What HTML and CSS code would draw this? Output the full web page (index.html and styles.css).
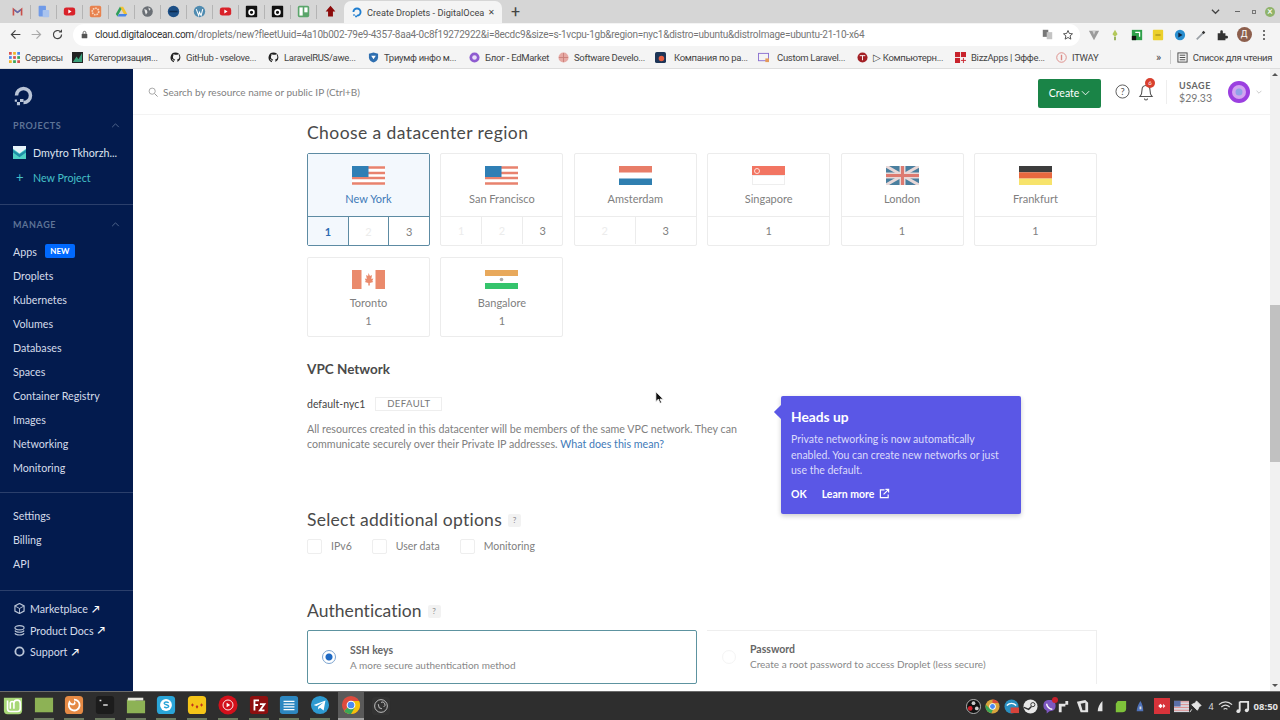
FILE: index.html
```html
<!DOCTYPE html>
<html lang="en">
<head>
    <meta charset="UTF-8">
    <title>Create Droplets - DigitalOcean</title>
    <link rel="stylesheet" href="styles.css">
</head>
<body>
    <!-- Browser tab strip -->
    <div class="tabstrip">
        <div class="pinned">
            <span class="pin"><svg viewBox="0 0 16 16"><path d="M2 13V3l6 5 6-5v10h-2V7L8 10 4 7v6z" fill="#c9504a"/><path d="M4 7l4 3 4-3V5L8 8 4 5z" fill="#5b6fb5"/></svg></span>
            <span class="pin"><svg viewBox="0 0 16 16"><rect x="2" y="1" width="9" height="13" rx="1" fill="#6f9ae8"/><rect x="7" y="6" width="8" height="9" rx="1" fill="#a9c3ee"/></svg></span>
            <span class="pin"><svg viewBox="0 0 16 16"><rect x="1" y="3" width="14" height="10" rx="3" fill="#d9222a"/><path d="M6.5 5.5v5l4-2.5z" fill="#fff"/></svg></span>
            <span class="pin"><svg viewBox="0 0 16 16"><rect x="1" y="1" width="14" height="14" rx="2" fill="#e8824e"/><circle cx="8" cy="8" r="4" fill="none" stroke="#f8d9c2" stroke-width="2" stroke-dasharray="2 1"/></svg></span>
            <span class="pin"><svg viewBox="0 0 16 16"><path d="M6 2h4l5 9h-4z" fill="#f2c230"/><path d="M6 2l-5 9 2 3 5-9z" fill="#2f9e5b"/><path d="M3 14h10l2-3H5z" fill="#4a86e8"/></svg></span>
            <span class="pin"><svg viewBox="0 0 16 16"><circle cx="8" cy="8" r="6.5" fill="#6a6f75"/><path d="M4 5l3 1 1 3-2 3-1-3zM9 3l3 2-2 2z" fill="#e4e4e4"/></svg></span>
            <span class="pin"><svg viewBox="0 0 16 16"><circle cx="8" cy="8" r="7" fill="#1c4f86"/><path d="M3 8h10" stroke="#0d2c50" stroke-width="2"/></svg></span>
            <span class="pin"><svg viewBox="0 0 16 16"><circle cx="8" cy="8" r="7" fill="#4f8bb0"/><path d="M4 5l3 8 1-4 2 4 2-8" fill="none" stroke="#fff" stroke-width="1.3"/></svg></span>
            <span class="pin"><svg viewBox="0 0 16 16"><rect x="1" y="3" width="14" height="10" rx="3" fill="#d9222a"/><path d="M6.5 5.5v5l4-2.5z" fill="#fff"/></svg></span>
            <span class="pin"><svg viewBox="0 0 16 16"><rect x="1" y="1" width="14" height="14" rx="1" fill="#111"/><circle cx="8" cy="9" r="3" fill="none" stroke="#fff" stroke-width="2"/></svg></span>
            <span class="pin"><svg viewBox="0 0 16 16"><rect x="1" y="1" width="14" height="14" rx="1" fill="#111"/><circle cx="8" cy="9" r="3" fill="none" stroke="#fff" stroke-width="2"/></svg></span>
            <span class="pin"><svg viewBox="0 0 16 16"><rect x="1" y="1" width="14" height="14" rx="2" fill="#5aa56a"/><rect x="3" y="3" width="4" height="10" fill="#fff"/><rect x="9" y="3" width="4" height="6" fill="#fff"/></svg></span>
            <span class="pin"><svg viewBox="0 0 16 16"><path d="M8 1l6 7h-3v6H5V8H2z" fill="#8c0a0a"/></svg></span>
        </div>
        <div class="tab">
            <svg class="tab-logo" viewBox="0 0 16 16"><path d="M8 14a6 6 0 1 0-6-6h2.5A3.5 3.5 0 1 1 8 11.5z" fill="#1f7ed0"/><path d="M3 11h2v2H3zM5.5 12.5H8V15H5.5z" fill="#1f7ed0"/></svg>
            <span class="tab-title">Create Droplets - DigitalOcea</span>
            <span class="tab-close">✕</span>
        </div>
        <span class="tab-new">+</span>
        <div class="win-btns">
            <svg viewBox="0 0 10 10" class="win-chev"><path d="M1 3l4 4 4-4" fill="none" stroke="#444" stroke-width="1.4"/></svg>
            <span class="win-min"></span>
            <span class="win-max"></span>
            <span class="win-close">×</span>
        </div>
    </div>

    <!-- Address bar -->
    <div class="toolbar">
        <svg class="nav-ic" viewBox="0 0 16 16"><path d="M14 8H3M8 3L3 8l5 5" fill="none" stroke="#444" stroke-width="1.5"/></svg>
        <svg class="nav-ic" viewBox="0 0 16 16"><path d="M2 8h11M8 3l5 5-5 5" fill="none" stroke="#aaa" stroke-width="1.5"/></svg>
        <svg class="nav-ic" viewBox="0 0 16 16"><path d="M13 8a5 5 0 1 1-1.5-3.5" fill="none" stroke="#444" stroke-width="1.5"/><path d="M13.5 1.5v4h-4z" fill="#444"/></svg>
        <div class="omnibox">
            <svg class="lock" viewBox="0 0 10 12"><rect x="1" y="5" width="8" height="6.5" rx="1" fill="#555"/><path d="M3 5V3.5a2 2 0 0 1 4 0V5" fill="none" stroke="#555" stroke-width="1.2"/></svg>
            <span class="url"><b>cloud.digitalocean.com</b>/droplets/new?fleetUuid=4a10b002-79e9-4357-8aa4-0c8f19272922&amp;i=8ecdc9&amp;size=s-1vcpu-1gb&amp;region=nyc1&amp;distro=ubuntu&amp;distroImage=ubuntu-21-10-x64</span>
            <svg class="omni-ic" viewBox="0 0 14 14"><rect x="1" y="1" width="7" height="9" fill="#777"/><rect x="6" y="4" width="7" height="9" fill="#c4c4c4"/></svg>
            <svg class="omni-star" viewBox="0 0 16 16"><path d="M8 2l1.800 4 4.200.4-3.200 2.800 1 4.300L8 11.300l-3.800 2.200 1-4.300L2 6.400 6.200 6z" fill="none" stroke="#444" stroke-width="1.2"/></svg>
        </div>
        <div class="ext">
            <svg viewBox="0 0 14 14"><path d="M1 2h12L7 13z" fill="#9b9b9b"/><path d="M5 2h4L7 7z" fill="#d0d0d0"/></svg>
            <svg viewBox="0 0 14 14"><path d="M7 1l3 5-3 3-3-3z" fill="#b4c95a"/><path d="M6 9h2v4H6z" fill="#8aa84a"/></svg>
            <svg viewBox="0 0 14 14"><rect x="1" y="1" width="12" height="12" fill="#2fa04a"/><path d="M1 8h5v5H1z" fill="#111"/><path d="M5 4h5v5" fill="none" stroke="#fff" stroke-width="1.5"/></svg>
            <svg viewBox="0 0 14 14"><rect x="1" y="1" width="12" height="12" rx="1" fill="#ecd02a"/><path d="M4 7h6" stroke="#a8921a" stroke-width="1.5"/></svg>
            <svg viewBox="0 0 14 14"><circle cx="7" cy="7" r="6" fill="#2a8fd0"/><path d="M5 4l5 3-5 3z" fill="#10233b"/></svg>
            <svg viewBox="0 0 14 14"><path d="M2 12l7-7" stroke="#9aa0a6" stroke-width="2"/><path d="M8 4l2-2 2 2-2 2z" fill="#333"/></svg>
            <svg viewBox="0 0 14 14"><path d="M2 5h3V3a1.500 1.500 0 0 1 3 0v2h3v3h1.500a1.500 1.500 0 0 1 0 3H11v2H2z" fill="#333"/></svg>
            <span class="avatar">Д</span>
            <span class="kebab"><i></i><i></i><i></i></span>
        </div>
    </div>

    <!-- Bookmarks -->
    <div class="bookmarks">
        <span class="bm bm-1"><svg viewBox="0 0 12 12"><rect width="3" height="3" fill="#d9534f"/><rect x="4.5" width="3" height="3" fill="#f0b429"/><rect x="9" width="3" height="3" fill="#4a86e8"/><rect y="4.5" width="3" height="3" fill="#4a86e8"/><rect x="4.5" y="4.5" width="3" height="3" fill="#d9534f"/><rect x="9" y="4.5" width="3" height="3" fill="#3aa35c"/><rect y="9" width="3" height="3" fill="#f0b429"/><rect x="4.5" y="9" width="3" height="3" fill="#3aa35c"/><rect x="9" y="9" width="3" height="3" fill="#d9534f"/></svg>Сервисы</span>
        <span class="bm bm-2"><svg viewBox="0 0 12 12"><rect width="12" height="12" fill="#222"/><path d="M1 11l4-6 2 3 4-7v10z" fill="#3aa07a"/></svg>Категоризация...</span>
        <span class="bm bm-3"><svg viewBox="0 0 12 12"><use href="#gh-mark"/></svg>GitHub - vselove...</span>
        <span class="bm bm-4"><svg viewBox="0 0 12 12"><use href="#gh-mark"/></svg>LaravelRUS/awe...</span>
        <span class="bm bm-5"><svg viewBox="0 0 12 12"><path d="M6 .5l5 1.500v4c0 3-2.500 4.500-5 5.500C3.500 10.500 1 9 1 6V2z" fill="#2f6fb0"/><path d="M3.500 4h5L6 8z" fill="#fff"/></svg>Триумф инфо м...</span>
        <span class="bm bm-6"><svg viewBox="0 0 12 12"><circle cx="6" cy="6" r="5.5" fill="#8e5bd0"/><circle cx="6" cy="6" r="2.5" fill="#e9def8"/></svg>Блог - EdMarket</span>
        <span class="bm bm-7"><svg viewBox="0 0 12 12"><circle cx="6" cy="6" r="5.5" fill="#e6a9a4"/><path d="M1 6h10M6 1v10" stroke="#c97f79"/></svg>Software Develo...</span>
        <span class="bm bm-8"><svg viewBox="0 0 12 12"><rect width="12" height="12" rx="2" fill="#1d3557"/><circle cx="7" cy="7" r="3" fill="#e85d3f"/></svg>Компания по ра...</span>
        <span class="bm bm-9"><svg viewBox="0 0 12 12"><rect x=".5" y="1.5" width="11" height="8" fill="none" stroke="#8a6fd0"/><rect x="8" y="7" width="4" height="4" fill="#e59a5b"/></svg>Custom Laravel...</span>
        <span class="bm bm-10"><svg viewBox="0 0 12 12"><circle cx="6" cy="6" r="5.5" fill="#a32025"/><path d="M3 4h6M6 4v5" stroke="#fff"/></svg>▷ Компьютерн...</span>
        <span class="bm bm-11"><svg viewBox="0 0 12 12"><rect width="5.5" height="5.5" fill="#c8232c"/><rect x="6.5" width="5.5" height="5.5" fill="#c8232c"/><rect y="6.5" width="5.5" height="5.5" fill="#c8232c"/><path d="M9.2 6.500V12M6.500 9.200H12" stroke="#c8232c"/></svg>BizzApps | Эффе...</span>
        <span class="bm bm-12"><svg viewBox="0 0 12 12"><circle cx="6" cy="6" r="5.2" fill="none" stroke="#dd8a85"/><path d="M6 3v6" stroke="#dd8a85" stroke-width="1.5"/></svg>ITWAY</span>
        <span class="bm-more">»</span>
        <span class="bm-sep"></span>
        <span class="bm bm-list"><svg viewBox="0 0 12 12"><rect x="1" y="1" width="10" height="10" fill="none" stroke="#444"/><path d="M3 3.500h6M3 6h6M3 8.500h6" stroke="#444"/></svg>Список для чтения</span>
    </div>

    <div class="app">
        <aside class="sidebar">
            <svg class="do-logo" viewBox="0 0 24 24"><path d="M12 22a10 10 0 1 0-10-10h4a6 6 0 1 1 6 6z" fill="#b9c4d6"/><path d="M8 16h4v3.500H8zM4.500 19.500H8V23H4.500zM2 16.500h2.500V19H2z" fill="#b9c4d6"/></svg>
            <div class="side-label">PROJECTS<svg viewBox="0 0 10 6"><path d="M1 5l4-4 4 4" fill="none" stroke="#5e7396" stroke-width="1"/></svg></div>
            <a class="side-item project"><svg viewBox="0 0 14 14"><rect width="14" height="14" fill="#4fd1c5"/><path d="M0 0h14v3L7 8 0 3z" fill="#e7f3fb"/><path d="M0 4l7 5 7-5v3l-7 5-7-5z" fill="#1f8ea8"/></svg>Dmytro Tkhorzh...</a>
            <a class="side-item new-project"><span class="plus">+</span>New Project</a>
            <div class="side-line line-1"></div>
            <div class="side-label">MANAGE<svg viewBox="0 0 10 6"><path d="M1 5l4-4 4 4" fill="none" stroke="#5e7396" stroke-width="1"/></svg></div>
            <nav class="side-nav">
                <a class="side-item">Apps <span class="new-badge">NEW</span></a>
                <a class="side-item">Droplets</a>
                <a class="side-item">Kubernetes</a>
                <a class="side-item">Volumes</a>
                <a class="side-item">Databases</a>
                <a class="side-item">Spaces</a>
                <a class="side-item">Container Registry</a>
                <a class="side-item">Images</a>
                <a class="side-item">Networking</a>
                <a class="side-item">Monitoring</a>
            </nav>
            <div class="side-line line-2"></div>
            <nav class="nav-account">
                <a class="side-item">Settings</a>
                <a class="side-item">Billing</a>
                <a class="side-item">API</a>
            </nav>
            <div class="side-line line-3"></div>
            <nav class="side-links">
                <a class="side-link"><svg viewBox="0 0 12 12"><path d="M6 .5l5 2.700v5.600L6 11.500 1 8.800V3.200z" fill="none" stroke="#b9c4d6" stroke-width="1.300"/><path d="M1 3.200L6 6l5-2.800M6 6v5.500" fill="none" stroke="#b9c4d6"/></svg>Marketplace <span class="arrow">↗</span></a>
                <a class="side-link"><svg viewBox="0 0 12 12"><ellipse cx="6" cy="3" rx="5" ry="2.300" fill="none" stroke="#b9c4d6" stroke-width="1.200"/><path d="M1 6c1 2.500 9 2.500 10 0M1 9c1 2.500 9 2.500 10 0" fill="none" stroke="#b9c4d6" stroke-width="1.200"/></svg>Product Docs <span class="arrow">↗</span></a>
                <a class="side-link"><svg viewBox="0 0 12 12"><circle cx="6" cy="6" r="4.500" fill="none" stroke="#b9c4d6" stroke-width="2"/></svg>Support <span class="arrow">↗</span></a>
            </nav>
        </aside>

        <div class="main">
            <header class="topbar">
                <svg class="search-ic" viewBox="0 0 12 12"><circle cx="5" cy="5" r="3.700" fill="none" stroke="#999" stroke-width="1"/><path d="M8 8l3.500 3.500" stroke="#999" stroke-width="1.200"/></svg>
                <span class="search-text">Search by resource name or public IP (Ctrl+B)</span>
                <button class="create-btn">Create<svg viewBox="0 0 10 6"><path d="M1 1l4 4 4-4" fill="none" stroke="#fff" stroke-width="1"/></svg></button>
                <svg class="help-ic" viewBox="0 0 16 16"><circle cx="8" cy="8" r="7" fill="none" stroke="#555" stroke-width="1"/><text x="8" y="11.500" text-anchor="middle" class="help-q">?</text></svg>
                <div class="bell">
                    <svg viewBox="0 0 16 18"><path d="M8 2.500c-2.800 0-4 2-4 4.500 0 3-.6 5-2 6.500h12c-1.400-1.500-2-3.500-2-6.500 0-2.500-1.200-4.500-4-4.500zM6.500 15.500a1.500 1.500 0 0 0 3 0" fill="none" stroke="#555" stroke-width="1.100"/></svg>
                    <span class="bell-count">6</span>
                </div>
                <div class="usage"><span class="usage-label">USAGE</span><span class="usage-sum">$29.33</span></div>
                <svg class="user-pic" viewBox="0 0 22 22"><circle cx="11" cy="11" r="11" fill="#9b3fe0"/><circle cx="11" cy="11" r="7" fill="#d2a4f0"/><circle cx="11" cy="11" r="3.500" fill="#8fa2e8"/></svg>
                <svg class="user-chev" viewBox="0 0 10 6"><path d="M1 1l4 4 4-4" fill="none" stroke="#aaa" stroke-width="1"/></svg>
            </header>

            <div class="content">
                <h2 class="sec-title title-region">Choose a datacenter region</h2>
                <div class="regions">
                    <div class="region selected">
                        <div class="region-top">
                            <svg class="flag" viewBox="0 0 33 19"><use href="#flag-us"/></svg>
                            <span>New York</span>
                        </div>
                        <div class="region-dc"><span class="on">1</span><span class="off">2</span><span>3</span></div>
                    </div>
                    <div class="region">
                        <div class="region-top">
                            <svg class="flag" viewBox="0 0 33 19"><use href="#flag-us"/></svg>
                            <span>San Francisco</span>
                        </div>
                        <div class="region-dc"><span class="off">1</span><span class="off">2</span><span>3</span></div>
                    </div>
                    <div class="region">
                        <div class="region-top">
                            <svg class="flag" viewBox="0 0 33 19"><rect width="33" height="6.500" fill="#e87d68"/><rect y="12.500" width="33" height="6.500" fill="#2f7fb0"/></svg>
                            <span>Amsterdam</span>
                        </div>
                        <div class="region-dc"><span class="off">2</span><span>3</span></div>
                    </div>
                    <div class="region">
                        <div class="region-top">
                            <svg class="flag" viewBox="0 0 33 19"><rect width="33" height="9.500" fill="#f27562"/><rect y="9.500" x=".5" width="32" height="9" fill="#fff" stroke="#eee"/><circle cx="5" cy="5" r="2.500" fill="none" stroke="#fde4df"/></svg>
                            <span>Singapore</span>
                        </div>
                        <div class="region-dc"><span>1</span></div>
                    </div>
                    <div class="region">
                        <div class="region-top">
                            <svg class="flag" viewBox="0 0 33 19"><rect width="33" height="19" fill="#4a7f9f"/><path d="M0 0l33 19M33 0L0 19" stroke="#e8d8d8" stroke-width="3"/><path d="M16.500 0v19M0 9.500h33" stroke="#e8d8d8" stroke-width="6"/><path d="M16.500 0v19M0 9.500h33" stroke="#dd7a70" stroke-width="3"/></svg>
                            <span>London</span>
                        </div>
                        <div class="region-dc"><span>1</span></div>
                    </div>
                    <div class="region">
                        <div class="region-top">
                            <svg class="flag" viewBox="0 0 33 19"><rect width="33" height="6.300" fill="#3d3d3d"/><rect y="6.300" width="33" height="6.300" fill="#e8683f"/><rect y="12.600" width="33" height="6.400" fill="#f7e36b"/></svg>
                            <span>Frankfurt</span>
                        </div>
                        <div class="region-dc"><span>1</span></div>
                    </div>
                    <div class="region region-short">
                        <div class="region-top">
                            <svg class="flag" viewBox="0 0 33 19"><rect width="9.500" height="19" fill="#ea8a6c"/><rect x="23.500" width="9.500" height="19" fill="#ea8a6c"/><path d="M16.500 3l1.500 3 2-1-.7 4 2-.5-1 2.500 1 1-3.500 1v2.500h-1.500V13l-3.500-1 1-1-1-2.500 2 .5-.7-4 2 1z" fill="#ea8a6c"/></svg>
                            <span>Toronto</span>
                            <span class="dc-plain">1</span>
                        </div>
                    </div>
                    <div class="region region-short">
                        <div class="region-top">
                            <svg class="flag" viewBox="0 0 33 19"><rect width="33" height="6" fill="#e8a95c"/><rect y="13" width="33" height="6" fill="#35c46c"/><circle cx="16.500" cy="9.500" r="1.800" fill="#aaa"/></svg>
                            <span>Bangalore</span>
                            <span class="dc-plain">1</span>
                        </div>
                    </div>
                </div>

                <div class="vpc">
                    <h3 class="vpc-title">VPC Network</h3>
                    <div class="vpc-name"><b>default-nyc1</b><span class="default-tag">DEFAULT</span></div>
                    <p class="vpc-text">All resources created in this datacenter will be members of the same VPC network. They can communicate securely over their Private IP addresses. <a>What does this mean?</a></p>

                    <div class="popover">
                        <h4>Heads up</h4>
                        <p>Private networking is now automatically enabled. You can create new networks or just use the default.</p>
                        <div class="pop-links">
                            <span>OK</span>
                            <span>Learn more<svg viewBox="0 0 12 12"><path d="M6 2H1.500v8.500H10V7" fill="none" stroke="#fff" stroke-width="1.300"/><path d="M5 7l5-5M7 1.500h3.500V5" fill="none" stroke="#fff" stroke-width="1.300"/></svg></span>
                        </div>
                    </div>
                </div>

                <h2 class="sec-title title-options">Select additional options <span class="hint">?</span></h2>
                <div class="options">
                    <label class="opt"><i></i>IPv6</label>
                    <label class="opt"><i></i>User data</label>
                    <label class="opt"><i></i>Monitoring</label>
                </div>

                <h2 class="sec-title title-auth">Authentication <span class="hint">?</span></h2>
                <div class="auth">
                    <div class="auth-card selected">
                        <span class="radio"></span>
                        <div><b>SSH keys</b><p>A more secure authentication method</p></div>
                    </div>
                    <div class="auth-card plain">
                        <span class="radio empty"></span>
                        <div><b>Password</b><p>Create a root password to access Droplet (less secure)</p></div>
                    </div>
                </div>
            </div>

            <div class="scrollbar">
                <span class="sb-up"></span>
                <span class="sb-thumb"></span>
                <span class="sb-down"></span>
            </div>

            <!-- mouse pointer from the recording -->
            <svg class="cursor" viewBox="0 0 12 16"><path d="M1 1v12l3-3 2 5 2-1-2-4h4z" fill="#111" stroke="#fff" stroke-width="1"/></svg>
        </div>
    </div>

    <!-- Desktop panel -->
    <footer class="panel">
        <div class="launchers">
            <span class="lnch"><svg viewBox="0 0 22 22"><path d="M1 2h20v14a4 4 0 0 1-4 4H5a4 4 0 0 1-4-4z" fill="#a8d878"/><path d="M5 5v9a3 3 0 0 0 3 3h8a3 3 0 0 0 3-3V8a2 2 0 0 0-7 0v6M12 8a2 2 0 0 0-4 0v6" fill="none" stroke="#fff" stroke-width="1.800"/></svg></span>
            <span class="lnch run"><svg viewBox="0 0 22 22"><rect x="1" y="3" width="20" height="16" fill="#8db255"/></svg></span>
            <span class="lnch run"><svg viewBox="0 0 22 22"><rect x="1" y="1" width="20" height="20" rx="4" fill="#e58a45"/><path d="M11 5a6 6 0 1 1-5 3c1 2 3 3 5 2 1-.5 1-2 0-2" fill="none" stroke="#fff" stroke-width="2"/></svg></span>
            <span class="lnch run"><svg viewBox="0 0 22 22"><rect x="1" y="1" width="20" height="20" rx="3" fill="#1c1c1c"/><path d="M5 6h2M9 11h5" stroke="#ddd" stroke-width="1.500"/></svg></span>
            <span class="lnch run"><svg viewBox="0 0 22 22"><path d="M1 5h8l2 1h10v14H1z" fill="#8db255"/><rect x="2" y="3" width="17" height="3" fill="#e8e8e0"/></svg></span>
            <span class="lnch run"><svg viewBox="0 0 22 22"><rect x="1" y="1" width="20" height="20" rx="4" fill="#2aa5d8"/><circle cx="11" cy="11" r="6.500" fill="#fff"/><path d="M14 8.500c-2-1.500-5-1-5 .5 0 2 5 1.500 5 3.500 0 1.500-3 2-5 .5" fill="none" stroke="#2aa5d8" stroke-width="1.600"/></svg></span>
            <span class="lnch run"><svg viewBox="0 0 22 22"><rect x="1" y="1" width="20" height="20" rx="4" fill="#f5c518"/><path d="M6 9l1.500 2L6 13l-1.500-2zM11 11l1.500 2-1.500 2-1.500-2zM16 9l1.500 2-1.500 2-1.500-2z" fill="#c0301e"/></svg></span>
            <span class="lnch run"><svg viewBox="0 0 22 22"><circle cx="11" cy="11" r="10.500" fill="#d3101b"/><circle cx="11" cy="11" r="5.500" fill="none" stroke="#fff"/><path d="M9.500 8.500v5l4-2.500z" fill="#fff"/></svg></span>
            <span class="lnch run"><svg viewBox="0 0 22 22"><rect x="1" y="1" width="20" height="20" rx="3" fill="#8d0f0f"/><path d="M6 17V6h5M6 11h4M12 10h5l-5 7h5" fill="none" stroke="#fff" stroke-width="2"/></svg></span>
            <span class="lnch run"><svg viewBox="0 0 22 22"><rect x="1" y="1" width="20" height="20" rx="3" fill="#2d87c0"/><path d="M5 7h12M5 10h12M5 13h12M5 16h12" stroke="#fff" stroke-width="1.300"/></svg></span>
            <span class="lnch run"><svg viewBox="0 0 22 22"><circle cx="11" cy="11" r="10" fill="#2d9ad0"/><path d="M4 11l13-5-2 11-4-3-2 2v-3l6-5-8 4z" fill="#fff"/></svg></span>
            <span class="lnch active"><svg viewBox="0 0 22 22"><circle cx="11" cy="11" r="10" fill="#dd4b3e"/><path d="M11 21a10 10 0 0 0 8.900-14.500H11L7 14l-3.500 3.500A10 10 0 0 0 11 21z" fill="#f4c20d"/><path d="M3.500 17.500A10 10 0 0 0 11 21l4-7H7z" fill="#3aa757"/><circle cx="11" cy="11" r="4.800" fill="#fff"/><circle cx="11" cy="11" r="3.700" fill="#4a8af4"/></svg></span>
            <span class="lnch"><svg viewBox="0 0 22 22"><rect x="1" y="1" width="20" height="20" rx="4" fill="#333"/><circle cx="11" cy="11" r="7" fill="none" stroke="#ccc" stroke-width="1"/><path d="M11 7a2 2 0 0 1 3 5M8 9l1 4 3 1" fill="none" stroke="#ccc"/></svg></span>
        </div>
        <div class="tray">
            <svg viewBox="0 0 16 16"><circle cx="8" cy="8" r="7.500" fill="#111" stroke="#ddd" stroke-width=".8"/><circle cx="8" cy="4.500" r="2" fill="#ccc"/><circle cx="4.500" cy="10" r="2.500" fill="#d0202a"/><circle cx="11.500" cy="10" r="2" fill="#ccc"/></svg>
            <svg viewBox="0 0 16 16"><circle cx="8" cy="8" r="7.500" fill="#d9a43c"/><path d="M8 .5a7.500 7.500 0 0 1 6.500 3.700H8z" fill="#d9483b"/><path d="M.8 6a7.500 7.500 0 0 0 6 9.300L9 10H5z" fill="#3aa757"/><circle cx="8" cy="8" r="3.500" fill="#fff"/><circle cx="8" cy="8" r="2.600" fill="#4a8af4"/></svg>
            <svg viewBox="0 0 16 16"><circle cx="8" cy="8" r="7.500" fill="#2a8fc0"/><path d="M3 7c3-3 7-3 10 0" fill="none" stroke="#fff" stroke-width="1.500"/><rect x="7" y="9" width="9" height="6" fill="#d8433a"/></svg>
            <svg viewBox="0 0 16 16"><circle cx="8" cy="8" r="7.500" fill="#e8e8e8"/><circle cx="10.500" cy="6" r="2.200" fill="none" stroke="#2f2f2f"/><path d="M1 9l5 2 3-3" fill="none" stroke="#2f2f2f" stroke-width="1.500"/></svg>
            <span class="viber"><svg viewBox="0 0 16 16"><path d="M8 1c4 0 6.500 1.500 6.500 6 0 4.500-2.500 6-6.500 6l-3 2.500V12.500C2.500 11.500 1.500 10 1.500 7 1.500 2.500 4 1 8 1z" fill="#7d57c1"/><path d="M5 5c0 3 3 6 6 6" fill="none" stroke="#fff" stroke-width="1.500"/></svg><i></i></span>
            <svg viewBox="0 0 16 16"><path d="M3 14V5h7V2h3v4h-3v2H6v6z" fill="#e4e4e4"/></svg>
            <svg viewBox="0 0 16 16"><path d="M2 3l9-2 3 3v10H6z" fill="#e4e4e4"/><path d="M6 5l5-1v8H8z" fill="#333"/></svg>
            <svg viewBox="0 0 16 16"><path d="M9 2v11H4c0-4 2-8 5-11z" fill="#e4e4e4"/></svg>
            <svg viewBox="0 0 16 16"><path d="M5 2h9v8a4 4 0 0 1-4 4H3V5z" fill="#7ec23a"/></svg>
            <svg viewBox="0 0 16 16"><path d="M9 2c2 3 3 7 3 11H5c0-4 2-8 4-11z" fill="#4f72b8"/><path d="M8 8h2v3H8z" fill="#ddd"/></svg>
            <span class="any"><svg viewBox="0 0 16 16"><path d="M3 8l3-3 3 3-3 3zM9.500 5l3 3-3 3z" fill="#fff"/></svg></span>
            <svg viewBox="0 0 16 12" class="t-flag"><rect width="16" height="12" fill="#d8d8e0"/><path d="M0 1h16M0 4h16M0 7h16M0 10h16" stroke="#d88" stroke-width="1"/><rect width="7" height="6" fill="#5a6fa8"/></svg>
            <svg viewBox="0 0 16 16"><path d="M9 2l5 5-2 1-2 4-6-6 4-2zM4 11l-2 3" fill="#e4e4e4" stroke="#e4e4e4"/></svg>
            <span class="t-num">4</span>
            <svg viewBox="0 0 16 16" class="t-wifi"><path d="M1 6c4-4 10-4 14 0M3.500 8.500c3-2.500 6-2.500 9 0M6 11c1-1 3-1 4 0" fill="none" stroke="#ddd" stroke-width="1.300"/></svg>
            <svg viewBox="0 0 16 16" class="t-music"><path d="M5 3h9v9M5 3v10" fill="none" stroke="#e4e4e4" stroke-width="2"/><circle cx="3.500" cy="13" r="2" fill="#e4e4e4"/><circle cx="12.500" cy="12" r="2" fill="#e4e4e4"/></svg>
            <span class="t-clock">08:50</span>
        </div>
    </footer>

    <!-- Shared symbols -->
    <svg class="defs" width="0" height="0">
        <symbol id="flag-us" viewBox="0 0 33 19">
            <rect width="33" height="19" fill="#fff"/>
            <path d="M0 1.500h33M0 7h33M0 12h33M0 17.500h33" stroke="#e8826e" stroke-width="2.700"/>
            <rect width="16.500" height="11" fill="#2f7fb5"/>
        </symbol>
        <symbol id="gh-mark" viewBox="0 0 12 12">
            <path d="M6 .5a5.500 5.500 0 0 0-1.700 10.700V9.500C3 9.800 2.600 8.800 2.600 8.800c-.6-.9.2-.8.2-.8.6 0 1 .7 1 .7.5.9 1.300.6 1.500.4 0-.4.2-.6.4-.8-1.500-.2-2.500-1-2.500-2.800 0-.6.2-1.100.5-1.500 0-.2-.2-.8.1-1.500 0 0 .5-.1 1.500.6a5 5 0 0 1 2.800 0c1-.7 1.500-.6 1.500-.6.3.7.1 1.300.1 1.500.3.400.5.900.5 1.500 0 1.800-1 2.600-2.500 2.800.2.2.4.6.4 1.100v1.600A5.500 5.500 0 0 0 6 .5z" fill="#222"/>
        </symbol>
    </svg>
</body>
</html>
```

FILE: styles.css
```css
* {
    box-sizing: border-box;
    margin: 0;
    padding: 0;
}

body {
    width: 1280px;
    height: 720px;
    overflow: hidden;
    display: flex;
    flex-direction: column;
    font-family: Lato, Arial, sans-serif;
    background-color: #fff;
    color: #444;
}

svg {
    display: block;
    flex-shrink: 0;
}

/* Browser chrome */
.tabstrip {
    height: 23px;
    display: flex;
    align-items: flex-end;
    background-color: #d6d6d6;
    padding-left: 5px;
    font-family: Roboto, Arial, sans-serif;
}

.pinned {
    display: flex;
    height: 23px;
    align-items: center;
}

.pin {
    width: 26px;
    height: 14px;
    display: flex;
    align-items: center;
    justify-content: center;
    border-right: 1px solid #b4b4b4;
}

.pin:last-child {
    border-right: none;
}

.pin svg {
    width: 13px;
    height: 13px;
}

.tab {
    width: 158px;
    height: 22px;
    margin-left: 1px;
    display: flex;
    align-items: center;
    padding-left: 7px;
    background-color: #f4f4f4;
    border-radius: 7px 7px 0 0;
    font-size: 9.2px;
    color: #444;
}

.tab-logo {
    width: 12px;
    height: 12px;
    margin-right: 4px;
}

.tab-title {
    width: 119px;
    white-space: nowrap;
}

.tab-close {
    font-size: 8px;
    margin-left: 2px;
}

.tab-new {
    margin-left: 9px;
    height: 22px;
    line-height: 21px;
    font-size: 16px;
    color: #444;
}

.win-btns {
    margin-left: auto;
    height: 23px;
    display: flex;
    align-items: center;
    padding-right: 5px;
}

.win-chev {
    width: 9px;
    height: 9px;
    margin-right: 15px;
}

.win-min {
    width: 5px;
    height: 1px;
    background-color: #666;
    margin-right: 12px;
}

.win-max {
    width: 4px;
    height: 4px;
    border: 1px solid #777;
    margin-right: 9px;
}

.win-close {
    width: 10px;
    height: 10px;
    line-height: 9px;
    text-align: center;
    border-radius: 50%;
    font-size: 10px;
    background-color: #8fb36a;
    color: #fff;
}

.toolbar {
    height: 23px;
    display: flex;
    align-items: center;
    background-color: #f4f4f4;
    padding-left: 9px;
    font-family: Roboto, Arial, sans-serif;
}

.nav-ic {
    width: 13px;
    height: 13px;
    margin-right: 8px;
}

.omnibox {
    flex: none;
    width: 1007px;
    height: 22px;
    margin-left: 1px;
    display: flex;
    align-items: center;
    padding-left: 8px;
    background-color: #fff;
    border-radius: 11px;
}

.lock {
    width: 7px;
    height: 9px;
    margin-right: 7px;
}

.url {
    width: 947px;
    font-size: 10px;
    letter-spacing: -.23px;
    color: #767676;
    white-space: nowrap;
}

.url b {
    font-weight: 400;
    color: #333;
}

.omni-ic {
    width: 11px;
    height: 11px;
    margin-right: 9px;
}

.omni-star {
    width: 12px;
    height: 12px;
}

.ext {
    display: flex;
    align-items: center;
    gap: 9.4px;
    margin-left: 8px;
}

.ext svg {
    width: 12px;
    height: 12px;
}

.avatar {
    width: 15px;
    height: 15px;
    margin: 0 -1px;
    line-height: 15px;
    text-align: center;
    border-radius: 50%;
    font-size: 9px;
    background-color: #8d5f4d;
    color: #fff;
}

.kebab {
    display: flex;
    flex-direction: column;
    gap: 2px;
    margin-left: 3px;
}

.kebab i {
    width: 2px;
    height: 2px;
    background-color: #444;
    border-radius: 50%;
}

.bookmarks {
    height: 23px;
    display: flex;
    align-items: center;
    background-color: #f4f4f4;
    border-bottom: 1px solid #ddd;
    padding-left: 9px;
    font-family: Roboto, Arial, sans-serif;
    font-size: 9.5px;
    letter-spacing: -.3px;
    color: #444;
}

.bm {
    display: flex;
    align-items: center;
    white-space: nowrap;
}

.bm svg {
    width: 11px;
    height: 11px;
    margin-right: 5px;
}

.bm-1 { width: 63px; }
.bm-2 { width: 98px; }
.bm-3 { width: 98px; }
.bm-4 { width: 100px; }
.bm-5 { width: 101px; }
.bm-6 { width: 89px; }
.bm-7 { width: 97px; }
.bm-8 { width: 103px; }
.bm-9 { width: 99px; }
.bm-10 { width: 98px; }
.bm-11 { width: 101px; }
.bm-12 { width: 60px; }

.bm-8 svg,
.bm-9 svg {
    margin-right: 8px;
}

.bm-more {
    margin-left: 40px;
    font-size: 11px;
}

.bm-sep {
    width: 1px;
    height: 14px;
    margin: 0 6px 0 9px;
    background-color: #ccc;
}

/* App layout */
.app {
    flex: 1;
    min-height: 0;
    display: flex;
}

.sidebar {
    width: 133px;
    flex: none;
    display: flex;
    flex-direction: column;
    background-color: #031b4e;
    color: #d5dcea;
}

.do-logo {
    width: 21px;
    height: 21px;
    margin: 16px 0 12px 13px;
}

.side-label {
    height: 14px;
    padding: 0 13px;
    display: flex;
    align-items: center;
    justify-content: space-between;
    font-size: 9px;
    font-weight: 700;
    letter-spacing: .6px;
    color: #5e7396;
}

.side-label svg {
    width: 9px;
    height: 5px;
}

.side-item {
    height: 24px;
    padding-left: 13px;
    display: flex;
    align-items: center;
    font-size: 10.7px;
    white-space: nowrap;
}

.project {
    margin-top: 8px;
    height: 25px;
    color: #dfe5f0;
}

.project svg {
    width: 13px;
    height: 13px;
    margin-right: 7px;
}

.new-project {
    color: #45c0c8;
}

.plus {
    width: 20px;
    padding-left: 3px;
    font-size: 13px;
}

.side-line {
    height: 1px;
    flex: none;
    background-color: #2b3f6b;
}

.line-1 {
    margin: 15px 0 12px;
}

.line-2 {
    margin: 13px 0 10px;
}

.line-3 {
    margin-top: 15px;
}

.side-nav {
    margin-top: 8px;
}

.new-badge {
    width: 30px;
    height: 14px;
    line-height: 14px;
    margin-left: 8px;
    text-align: center;
    border-radius: 2px;
    background-color: #0069ff;
    color: #fff;
    font-size: 8px;
    font-weight: 700;
}

.side-links {
    padding-top: 7px;
}

.side-link {
    height: 21.5px;
    padding-left: 14px;
    display: flex;
    align-items: center;
    font-size: 10.7px;
}

.side-link svg {
    width: 11px;
    height: 11px;
    margin-right: 5px;
}

.arrow {
    margin-left: 4px;
    font-size: 10px;
    font-weight: 700;
    color: #fff;
}

.main {
    flex: 1;
    min-width: 0;
    position: relative;
    overflow: hidden;
}

.topbar {
    height: 46px;
    display: flex;
    align-items: center;
    padding-left: 15px;
    border-bottom: 1px solid #f3f3f3;
}

.search-ic {
    width: 10px;
    height: 10px;
    margin-right: 5px;
}

.search-text {
    font-size: 10px;
    color: #7f7f7f;
}

.create-btn {
    width: 63px;
    height: 29px;
    margin-left: auto;
    margin-top: 3px;
    display: flex;
    align-items: center;
    justify-content: center;
    gap: 2px;
    border: none;
    border-radius: 2px;
    background-color: #1a8447;
    color: #fff;
    font-family: Lato, Arial, sans-serif;
    font-size: 10.5px;
}

.create-btn svg {
    width: 9px;
    height: 6px;
}

.help-ic {
    width: 15px;
    height: 15px;
    margin-left: 14px;
}

.help-q {
    font-size: 10px;
    fill: #555;
}

.bell {
    position: relative;
    margin-left: 8px;
    margin-right: 12px;
}

.bell svg {
    width: 16px;
    height: 18px;
}

.bell-count {
    position: absolute;
    top: -5px;
    right: -1px;
    width: 10px;
    height: 10px;
    line-height: 10px;
    text-align: center;
    border-radius: 50%;
    background-color: #d8402f;
    color: #fff;
    font-size: 6px;
}

.usage {
    display: flex;
    flex-direction: column;
    padding-left: 12px;
    border-left: 1px solid #eee;
}

.usage-label {
    font-size: 9px;
    font-weight: 700;
    letter-spacing: .5px;
    color: #666;
}

.usage-sum {
    font-size: 10.5px;
    color: #777;
    margin-top: 1px;
}

.user-pic {
    width: 22px;
    height: 22px;
    margin-left: 16px;
}

.user-chev {
    width: 6px;
    height: 4px;
    margin: 0 18px 0 6px;
}

.content {
    padding: 8px 0 0 174px;
    width: 964px;
}

.sec-title {
    font-size: 17.5px;
    font-weight: 400;
    line-height: 20px;
    color: #4a4a4a;
}

.title-region {
    letter-spacing: .42px;
}

.regions {
    display: grid;
    grid-template-columns: repeat(6, 123px);
    gap: 11px 10.4px;
    margin-top: 10px;
}

.region {
    height: 93px;
    display: flex;
    flex-direction: column;
    border: 1px solid #ececec;
    border-radius: 2px;
    font-size: 11px;
    color: #808080;
}

.region-short {
    height: 80px;
}

.region-top {
    height: 62px;
    padding-top: 12px;
    display: flex;
    flex-direction: column;
    align-items: center;
}

.region-short .region-top {
    height: auto;
}

.flag {
    width: 33px;
    height: 19px;
    margin-bottom: 7px;
}

.dc-plain {
    margin-top: 5px;
}

.region-dc {
    flex: 1;
    display: flex;
    border-top: 1px solid #ececec;
    padding-bottom: 1px;
}

.region-dc span {
    flex: 1;
    display: flex;
    align-items: center;
    justify-content: center;
    border-left: 1px solid #ececec;
}

.region-dc span:first-child {
    border-left: none;
}

.region-dc .off {
    color: #ececec;
}

.region.selected {
    border-color: #5d8ba3;
    color: #3f7ab8;
}

.selected .region-top {
    background-color: #f3f8fd;
}

.selected .region-dc {
    border-top-color: #5d8ba3;
    color: #808080;
    padding-bottom: 0;
}

.selected .region-dc span {
    border-left-color: #5d8ba3;
}

.selected .region-dc .on {
    background-color: #f3f8fd;
    color: #2d6bb3;
    font-weight: 700;
}

.selected .region-dc .off {
    color: #ececec;
}

.vpc {
    position: relative;
    margin-top: 23px;
    height: 134px;
}

.vpc-title {
    font-size: 13.5px;
    font-weight: 700;
    line-height: 18px;
    color: #4a4a4a;
}

.vpc-name {
    margin-top: 17px;
    height: 18px;
    display: flex;
    align-items: center;
    font-size: 10.5px;
}

.vpc-name b {
    font-weight: 400;
    color: #444;
}

.default-tag {
    width: 67px;
    height: 14px;
    line-height: 12px;
    margin-left: 10px;
    text-align: center;
    border: 1px solid #eee;
    font-size: 9.5px;
    letter-spacing: .4px;
    color: #777;
}

.vpc-text {
    width: 440px;
    margin-top: 8px;
    font-size: 10.7px;
    line-height: 15px;
    color: #808080;
}

.vpc-text a {
    color: #3f7ab8;
}

.popover {
    position: absolute;
    left: 474px;
    top: 36px;
    width: 240px;
    height: 118px;
    padding: 13px 10px 0;
    background-color: #5a57e6;
    border-radius: 2px;
    box-shadow: 0 2px 5px rgba(0, 0, 0, .2);
    color: #fff;
}

.popover::before {
    content: "";
    position: absolute;
    left: -5px;
    top: 11px;
    width: 10px;
    height: 10px;
    background-color: #5a57e6;
    transform: rotate(45deg);
}

.popover h4 {
    font-size: 13.8px;
    font-weight: 700;
    line-height: 16px;
}

.popover p {
    margin-top: 7px;
    font-size: 10.5px;
    line-height: 15.5px;
    color: #dcdbfb;
}

.pop-links {
    margin-top: 9px;
    display: flex;
    gap: 15px;
    font-size: 10.5px;
    font-weight: 700;
}

.pop-links span {
    display: flex;
    align-items: center;
}

.pop-links svg {
    width: 11px;
    height: 11px;
    margin-left: 5px;
}

.title-options {
    margin-top: 16px;
    display: flex;
    align-items: center;
    gap: 6px;
    letter-spacing: .26px;
}

.hint {
    width: 13px;
    height: 13px;
    line-height: 13px;
    text-align: center;
    background-color: #f2f2f2;
    border-radius: 2px;
    font-size: 8px;
    letter-spacing: 0;
    color: #888;
}

.options {
    display: flex;
    margin-top: 8px;
    height: 16px;
}

.opt {
    display: flex;
    align-items: center;
    font-size: 10.5px;
    color: #808080;
    margin-right: 20px;
}

.opt i {
    width: 15px;
    height: 15px;
    margin-right: 9px;
    border: 1px solid #eee;
    border-radius: 2px;
}

.title-auth {
    margin-top: 47px;
    display: flex;
    align-items: center;
    gap: 6px;
    letter-spacing: .05px;
}

.auth {
    display: flex;
    gap: 10px;
    margin-top: 9px;
}

.auth-card {
    width: 390px;
    height: 54px;
    display: flex;
    align-items: center;
    padding-left: 14px;
    font-size: 10px;
    color: #888;
}

.auth-card b {
    display: block;
    font-size: 10.5px;
    font-weight: 700;
    color: #666;
}

.auth-card p {
    margin-top: 3px;
}

.auth-card.selected {
    border: 1px solid #5d93a0;
    border-radius: 2px;
}

.auth-card.plain {
    border-top: 1px solid #eee;
    border-right: 1px solid #eee;
    padding: 0 0 2px 15px;
}

.radio {
    width: 14px;
    height: 14px;
    margin-right: 14px;
    border: 1px solid #7ba3cf;
    border-radius: 50%;
    background: radial-gradient(circle, #1f6ac4 3px, #fff 4px);
}

.radio.empty {
    background: none;
    border-color: #f4f4f4;
}

.scrollbar {
    position: absolute;
    top: 0;
    right: 0;
    bottom: 0;
    width: 10px;
    background-color: #f1f1f1;
}

.sb-thumb {
    position: absolute;
    top: 236px;
    left: 0;
    width: 10px;
    height: 157px;
    background-color: #c1c1c1;
}

.sb-up,
.sb-down {
    position: absolute;
    left: 2px;
    border-left: 3px solid transparent;
    border-right: 3px solid transparent;
}

.sb-up {
    top: 4px;
    border-bottom: 3px solid #555;
}

.sb-down {
    bottom: 4px;
    border-top: 3px solid #555;
}

.cursor {
    position: absolute;
    left: 522px;
    top: 321px;
    width: 10px;
    height: 15px;
}

.defs {
    position: absolute;
}

/* Desktop panel */
.panel {
    height: 29px;
    display: flex;
    align-items: center;
    justify-content: space-between;
    background-color: #2e2e2e;
    border-top: 1px solid #6a6a6a;
    font-family: "Noto Sans", Arial, sans-serif;
}

.launchers {
    display: flex;
    align-items: center;
    height: 28px;
    padding-left: 3px;
}

.lnch {
    width: 20px;
    height: 28px;
    margin-right: 10.7px;
    display: flex;
    align-items: center;
    justify-content: center;
}

.lnch svg {
    width: 20px;
    height: 20px;
}

.lnch.run {
    border-bottom: 2px solid #6c7a60;
}

.lnch.active {
    width: 26px;
    margin: 0 7.7px 0 -3px;
    background-color: #5a5a5a;
    border-bottom: 2px solid #a0a0a0;
}

.tray {
    display: flex;
    align-items: center;
    padding-right: 2px;
}

.tray svg {
    width: 15px;
    height: 15px;
    margin-right: 4px;
}

.viber {
    position: relative;
    display: flex;
}

.tray .viber svg {
    margin-right: -1px;
}

.viber i {
    position: absolute;
    right: -2px;
    top: -2px;
    width: 6px;
    height: 6px;
    border-radius: 50%;
    background-color: #c8202c;
}

.any {
    width: 16px;
    height: 16px;
    margin: 0 4px 0 3px;
    display: flex;
    align-items: center;
    justify-content: center;
    background-color: #d8333a;
}

.tray .any svg {
    width: 12px;
    height: 12px;
    margin: 0;
}

.tray .t-flag {
    margin-right: -1px;
}

.t-num {
    font-size: 9px;
    color: #ddd;
    margin: 0 4px 0 1px;
}

.tray .t-wifi {
    margin-right: 2px;
}

.t-clock {
    font-size: 9.5px;
    font-weight: 700;
    color: #e4e4e4;
}
```
